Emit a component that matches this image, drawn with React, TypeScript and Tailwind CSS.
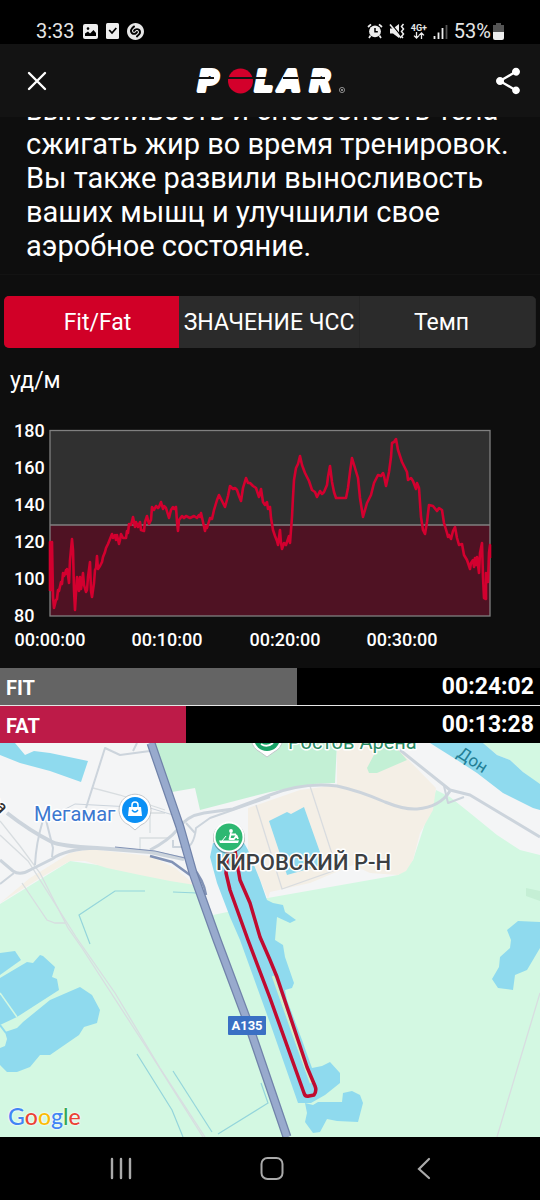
import { useState } from "react";
import { MdShare } from "react-icons/md";
import { SiShazam } from "react-icons/si";

const tabs = [
  { name: "Fit/Fat", padding: "pl-3" },
  { name: "ЗНАЧЕНИЕ ЧСС", padding: "" },
  { name: "Темп", padding: "pr-3" },
];

const zones = [
  { name: "FIT", time: "00:24:02", percent: 55, color: "bg-[#646464]" },
  { name: "FAT", time: "00:13:28", percent: 34.5, color: "bg-[#bd1b48]" },
];

const bpmLabels = [
  { label: "180", y: 27 },
  { label: "160", y: 64 },
  { label: "140", y: 101 },
  { label: "120", y: 138 },
  { label: "100", y: 175 },
  { label: "80", y: 212 },
];

const timeLabels = [
  { label: "00:00:00", x: 50 },
  { label: "00:10:00", x: 167 },
  { label: "00:20:00", x: 285 },
  { label: "00:30:00", x: 402 },
];

const heartRate =
  "50,181 50,132 51,180 52,132 53,187 54,198 56,190 57,189 58,180 59,181 61,172 62,174 63,163 64,166 65,164 66,160 67,164 67,159 68,165 69,173 70,150 72,129 73,140 74,180 75,200 76,183 77,167 78,174 79,181 80,167 81,179 82,172 83,163 84,175 86,182 87,180 88,167 90,152 91,181 92,187 94,173 95,160 96,158 97,146 98,159 100,156 102,152 103,147 105,142 106,138 108,134 110,129 112,124 113,128 115,125 116,130 117,125 119,134 120,130 121,124 123,128 126,128 127,121 128,123 129,114 131,115 133,107 135,117 136,112 138,117 140,112 141,120 144,121 145,112 147,106 149,114 151,110 152,97 154,100 156,96 158,98 159,97 161,92 163,99 164,96 166,98 169,108 171,100 173,97 174,99 176,97 177,112 178,121 179,110 182,106 184,108 186,106 190,108 194,106 197,108 199,105 200,107 201,103 203,112 205,121 206,116 207,118 210,108 212,109 214,100 217,90 219,85 222,91 225,97 228,86 230,76 233,79 235,78 237,80 239,86 241,91 243,78 246,68 248,73 250,73 253,76 256,78 259,87 261,79 263,92 265,95 267,92 268,99 270,97 271,108 273,120 275,126 277,131 278,135 280,120 281,133 282,139 284,133 286,135 287,132 289,126 290,133 292,107 293,87 294,70 296,58 298,54 300,46 302,55 305,63 309,71 312,80 315,82 317,87 320,81 322,84 324,82 327,75 328,67 330,56 332,72 334,82 336,88 341,88 346,88 348,78 350,62 352,48 355,58 358,68 360,88 363,107 367,93 371,85 374,73 378,65 381,66 383,63 384,66 386,76 389,62 391,47 392,33 394,32 396,29 398,40 402,52 407,62 408,70 411,68 413,71 416,79 417,73 419,78 421,107 423,120 425,124 427,112 429,95 433,96 437,101 439,98 442,100 444,113 447,123 448,127 449,125 451,129 453,121 455,117 457,128 459,135 462,134 464,145 467,150 470,159 471,153 473,150 474,157 475,148 476,155 477,147 479,163 480,143 482,133 483,167 484,188 486,189 486,163 488,172 489,143 490,135 490,148";

function StatusBar() {
  return (
    <div className="flex h-11 items-center justify-between bg-black px-9 pt-[18px] text-[20px] leading-7 text-[#e6e6e6]">
      <div className="flex items-center gap-[8px]">
        <span>3:33</span>
        <svg className="h-[15px] w-[15px]" viewBox="0 0 15 15">
          <rect width="15" height="15" rx="2" fill="#eee" />
          <circle cx="5" cy="4.6" r="1.3" fill="#000" />
          <path d="M2 12 V9.5 L5 7.5 L7 9.5 L10.5 6 L13 9 V12 Z" fill="#000" />
        </svg>
        <svg className="h-[16px] w-[13px]" viewBox="0 0 13 16">
          <rect width="13" height="16" rx="1.5" fill="#eee" />
          <path d="M3.2 7 L6 10 L10.3 5" fill="none" stroke="#000" strokeWidth="1.8" />
        </svg>
        <SiShazam className="h-[17px] w-[17px]" />
      </div>
      <div className="flex items-center gap-[6px]">
        <svg className="h-[16px] w-[16px]" viewBox="0 0 16 16">
          <circle cx="8" cy="8.4" r="5.9" fill="#eee" />
          <path d="M8 5 V8.8 H10.8" fill="none" stroke="#000" strokeWidth="1.5" />
          <path d="M1 4 L4 1.3 M15 4 L12 1.3 M3.6 12.5 L2 15 M12.4 12.5 L14 15" stroke="#eee" strokeWidth="1.7" />
        </svg>
        <svg className="h-[16px] w-[16px]" viewBox="0 0 16 16">
          <path d="M1 5.5 H4 L10 1 V15 L4 10.5 H1 Z" fill="#eee" />
          <path d="M1.5 0 L12.5 13.5" stroke="#000" strokeWidth="1.2" />
          <path d="M1 1.5 L12 15" stroke="#eee" strokeWidth="1.6" />
          <path d="M14.5 1 L12.5 3.5 L14.5 6 L12.5 8.5 L14.5 11 L12.5 13.5 L14 15" fill="none" stroke="#eee" strokeWidth="1.5" />
        </svg>
        <div className="flex w-[16px] flex-col items-center">
          <span className="text-[9px] leading-[8px] font-bold">4G+</span>
          <svg className="h-[7px] w-[12px]" viewBox="0 0 12 7">
            <path d="M3.5 0 V6 M1 3.6 L3.5 6 L6 3.6 M8.5 7 V1 M6 3.4 L8.5 1 L11 3.4" fill="none" stroke="#eee" strokeWidth="1.3" />
          </svg>
        </div>
        <svg className="h-[15px] w-[15px]" viewBox="0 0 15 15">
          <path d="M1.5 15 V12 M5.5 15 V8.5 M9.5 15 V4" stroke="#eee" strokeWidth="1.8" />
          <path d="M13.5 15 V1" stroke="#555" strokeWidth="1.8" />
        </svg>
        <div className="flex items-center gap-[2px]">
          <span>53%</span>
          <svg className="h-[17px] w-[11px]" viewBox="0 0 11 17">
            <path d="M3 0 H8 V2 H11 V9 H0 V2 H3 Z" fill="#555" />
            <path d="M0 9 H11 V15 Q11 17 9 17 H2 Q0 17 0 15 Z" fill="#eee" />
          </svg>
        </div>
      </div>
    </div>
  );
}

function PolarLogo() {
  return (
    <svg className="h-[28px] w-[150px] overflow-visible" viewBox="0 0 150 28" role="img" aria-label="Polar">
      <g
        fill="#fff"
        stroke="#fff"
        strokeWidth="4"
        strokeLinejoin="round"
        fontFamily="DejaVu Sans"
        fontWeight="700"
        fontStyle="italic"
        fontSize="28"
      >
        <text x="3" y="24">P</text>
        <text x="60" y="24">L</text>
        <text x="84" y="24">A</text>
        <text x="115" y="24">R</text>
      </g>
      <circle cx="45.500" cy="14" r="12.500" fill="#d3002b" />
      <path d="M0 11 H19 M32 11 H76 M88 11 H103 M112 11 H130" stroke="#131313" strokeWidth="2" />
      <circle cx="147" cy="23" r="2.600" fill="none" stroke="#bbb" strokeWidth="0.700" />
      <circle cx="147" cy="23" r="0.900" fill="#bbb" />
    </svg>
  );
}

function Header() {
  return (
    <header className="grid h-[73px] grid-cols-[1fr_auto_1fr] items-center bg-[#131313] px-4">
      <button type="button" aria-label="Закрыть" className="flex w-[42px] justify-center">
        <svg className="h-[26px] w-[26px]" viewBox="0 0 26 26">
          <path d="M5 5 L21 21 M21 5 L5 21" stroke="#fff" strokeWidth="2.4" strokeLinecap="round" />
        </svg>
      </button>
      <PolarLogo />
      <button type="button" aria-label="Поделиться" className="justify-self-end text-white">
        <MdShare className="h-[32px] w-[32px]" />
      </button>
    </header>
  );
}

function HeartRateChart() {
  return (
    <svg className="block w-full" viewBox="0 0 540 258">
      <rect x="50" y="21" width="440" height="94" fill="#303030" />
      <rect x="50" y="115" width="440" height="91" fill="#4f1223" />
      <path d="M50 115 H490" stroke="#808080" strokeWidth="1.300" />
      <rect x="50" y="20.500" width="440" height="185.500" fill="none" stroke="#808080" strokeWidth="1.300" />
      <polyline points={heartRate} fill="none" stroke="#d3002f" strokeWidth="2.600" strokeLinejoin="round" />
      <g fill="#fff" fontFamily="Roboto" fontWeight="500" fontSize="18">
        {bpmLabels.map((item) => (
          <text key={item.label} x="14" y={item.y}>{item.label}</text>
        ))}
        {timeLabels.map((item) => (
          <text key={item.label} x={item.x} y="236" textAnchor="middle">{item.label}</text>
        ))}
      </g>
    </svg>
  );
}

function RouteMap() {
  return (
    <section className="relative overflow-hidden bg-[#d3f8e2]">
      <svg className="block w-full" viewBox="0 0 540 394">
        <rect width="540" height="394" fill="#d3f8e2" />

        {/* city blocks */}
        <path d="M0 0 H540 V112 L520 107 497 92 470 70 450 54 436 47 413 117 398 132 262 156 232 168 213 172 200 142 140 128 70 118 0 161 Z" fill="#f4f5f6" />
        <path d="M0 160 L30 135 70 110 90 106 150 113 175 125 195 142 170 138 140 132 107 125 85 118 70 118 45 132 Z" fill="#f5f0e6" />
        <path d="M248 65 L300 47 337 42 337 0 392 0 436 45 433 67 420 90 413 117 406 128 398 132 370 130 353 122 310 140 270 149 268 156 248 107 Z" fill="#f4efe6" />
        <path d="M155 0 H337 L335 40 313 41 270 49 200 67 195 45 172 49 Z" fill="#c3f0d5" />
        <path d="M375 0 L376 8 367 25 369 30 377 30 407 17 392 0 Z" fill="#c3f0d5" />
        <path d="M483 0 H540 V42 L523 29 510 17 497 12 Z" fill="#d3f8e2" />
        <path d="M526 145 L540 148 V158 L526 153 Z" fill="#c5efd5" />

        {/* water */}
        <g fill="#8fdaee">
          <path d="M0 0 H15 L25 12 34 8 50 10 88 18 81 39 50 28 20 20 0 12 Z" />
          <path d="M430 0 H483 L497 12 510 17 523 29 540 41 V67 L533 65 503 50 477 30 457 17 Z" />
          <path d="M269 78 L287 69 291 71 304 64 321 112 322 122 287 132 Z" />
          <path d="M213 100 L210 114 217 140 230 174 240 197 270 280 298 360 311 360 325 352 340 340 340 330 330 319 322 323 312 325 302 297 287 257 285 247 292 245 294 240 285 214 283 202 275 197 277 174 290 180 296 177 285 169 283 162 273 160 267 157 260 137 248 107 244 100 Z" />
          <path d="M305 360 L313 362 318 359 342 359 343 350 352 348 360 352 363 360 358 379 337 378 327 376 320 389 313 390 305 379 307 370 Z" />
          <path d="M0 210 L15 208 21 217 0 232 Z" />
          <path d="M0 235 L27 219 33 220 40 212 43 213 55 224 52 234 57 236 59 247 17 274 0 282 Z" />
          <path d="M5 289 L17 285 23 279 50 257 80 244 92 252 100 267 97 280 84 284 79 292 50 312 40 312 30 324 17 329 7 329 0 322 V305 L5 303 7 296 Z" />
          <path d="M507 187 L518 178 540 179 V205 L527 227 515 232 513 247 498 245 492 236 499 224 500 214 510 205 511 197 Z" />
        </g>
        <path d="M0 250 L17 274" stroke="#d3f8e2" strokeWidth="1.500" />
        <path d="M0 282 L6 290" stroke="#8fdaee" strokeWidth="2" />
        <path d="M273 233 L292 287 311 340" fill="none" stroke="#d3efc9" strokeWidth="2.500" />

        {/* small streams and paths */}
        <g fill="none" stroke="#94d5db" strokeWidth="1.200">
          <path d="M145 148 H115 L79 172 90 201" />
          <path d="M173 149 L197 150" />
          <path d="M137 311 L172 367 183 394" />
          <path d="M173 328 L212 389" />
          <path d="M218 391 L268 360 261 340" />
        </g>
        <g fill="none" stroke="#d8dde0" strokeWidth="1.300">
          <path d="M0 78 L20 103 40 130 68 185 82 205 150 310 203 394" />
          <path d="M0 92 L28 118 76 194 115 250 160 325 205 394" />
          <path d="M22 140 L47 177 55 180 65 180" />
          <path d="M540 250 L522 310 497 394" />
          <path d="M310 43 L334 117 333 128 282 146 256 62" stroke="#d9dcdf" />
          <path d="M93 45 L120 52 165 67 M150 90 V70 H165 M140 108 V95 H170" />
        </g>

        {/* roads */}
        <g fill="none" stroke="#ccd4dc" strokeWidth="3" strokeLinejoin="round">
          <path d="M86 65 L105 5 120 12 150 8 M133 8 L137 0" strokeWidth="2" />
          <path d="M7 70 Q30 88 52 99 Q60 103 97 105 L150 109 184 116" strokeWidth="4" />
          <path d="M0 117 L13 128 Q20 133 30 127 L52 116 Q65 106 97 105" />
          <path d="M0 141 L14 130 M35 122 Q36 100 43 77 M46 77 L53 105 52 114" strokeWidth="2" />
          <path d="M50 74 L75 61 150 65 173 72" strokeWidth="1" />
          <path d="M150 107 Q168 98 178 86 Q186 73 204 70 L233 66 270 52 Q303 39 337 43 Q360 48 385 59 Q405 67 417 66 Q440 64 450 48" />
          <path d="M400 7 L450 47 470 52 500 70 540 94" />
          <path d="M182 107 Q194 105 196 85 L210 75 270 54" strokeWidth="2" />
          <path d="M444 43 L448 60 464 54" strokeWidth="2" />
          <path d="M173 97 V104 H182 M186 80 L195 90" strokeWidth="2" />
        </g>
        <g fill="none" stroke="#8192b5" strokeWidth="2.500">
          <path d="M115 104 L155 108 185 115" strokeWidth="1" />
          <path d="M150 113 L172 119 190 132 M191 122 Q204 137 206 152" />
        </g>
        <path d="M151 0 L180 84 193 130 217 197 247 277 287 394" fill="none" stroke="#7183aa" strokeWidth="9" />
        <path d="M151 0 L180 84 193 130 217 197 247 277 287 394" fill="none" stroke="#98aacd" strokeWidth="6.500" />

        {/* route */}
        <path
          d="M228 105 L226 130 230 147 248 197 270 255 304 350 Q305 354 309 353 L314 352 Q317 348 315 343 L307 324 298 297 277 234 270 217 260 194 250 160 240 137 235 108"
          fill="none"
          stroke="#c00b30"
          strokeWidth="3.500"
          strokeLinejoin="round"
        />

        {/* labels */}
        <g fontFamily="Roboto" fontWeight="500" fontSize="20" stroke="#fff" strokeWidth="3" strokeLinejoin="round" paintOrder="stroke">
          <text x="34" y="78" fill="#3c78d0" fontWeight="400">Мегамаг</text>
          <text x="288" y="6" fill="#2b8a63" fontWeight="400">Ростов Арена</text>
          <text x="216" y="127" fill="#3c4043" fontSize="22">КИРОВСКИЙ Р-Н</text>
          <text x="-12" y="57" fill="#333" fontSize="17" transform="rotate(48 -12 57)">ва</text>
        </g>
        <text x="456" y="13" fill="#237f96" fontFamily="Roboto" fontSize="17" transform="rotate(33 456 13)">Дон</text>
        <rect x="228" y="273" width="38" height="19" rx="1" fill="#3a70c4" />
        <text x="247" y="287" fill="#fff" fontFamily="Roboto" fontWeight="700" fontSize="13" textAnchor="middle">A135</text>

        {/* shop pin */}
        <path d="M135 87 L129 82 A16 16 0 1 1 141 82 Z" fill="#fff" stroke="#c4c8cc" />
        <circle cx="135" cy="67" r="13" fill="#0b90f5" />
        <path d="M129 64 H141 L142 73 H128 Z" fill="#fff" />
        <path d="M132 64 V62 A3 3 0 0 1 138 62 V64" fill="none" stroke="#fff" strokeWidth="1.500" />
        <path d="M132 67 Q135 71 138 67" fill="none" stroke="#0b90f5" strokeWidth="1.300" />

        {/* stadium pin */}
        <path d="M267 14 L260 9 A16 16 0 1 1 274 9 Z" fill="#fff" stroke="#c4c8cc" />
        <circle cx="267" cy="-5" r="13" fill="#1aa367" />
        <path d="M261 1 Q267 5 273 0" fill="none" stroke="#fff" strokeWidth="2" />

        {/* rowing start */}
        <circle cx="229" cy="95" r="16" fill="#000" opacity="0.3" />
        <circle cx="229" cy="94" r="15.500" fill="#fff" />
        <circle cx="229" cy="94" r="13.500" fill="#2eb872" />
        <circle cx="231" cy="88" r="1.900" fill="#fff" />
        <path d="M231 90 L229.500 96 H234 L236.500 92.500 L238 96 M231 91.500 H236" fill="none" stroke="#fff" strokeWidth="1.800" strokeLinejoin="round" />
        <path d="M219 97.500 H239 L238 100 H220 Z" fill="#fff" />
        <path d="M226 93 L222 98" stroke="#fff" strokeWidth="1" />
      </svg>
      <div className="absolute bottom-[7px] left-2 flex text-[23px] leading-7 font-medium [font-family:Lato,sans-serif] [text-shadow:0_0_2px_#fff,0_0_2px_#fff]">
        <span className="text-[#4285f4]">G</span>
        <span className="text-[#ea4335]">o</span>
        <span className="text-[#fbbc05]">o</span>
        <span className="text-[#4285f4]">g</span>
        <span className="text-[#34a853]">l</span>
        <span className="text-[#ea4335]">e</span>
      </div>
    </section>
  );
}

function NavigationBar() {
  return (
    <nav className="grid h-[63px] grid-cols-3 place-items-center bg-black pr-[42px] pl-[46px]">
      <button type="button" aria-label="Недавние">
        <svg className="h-6 w-6" viewBox="0 0 24 24">
          <path d="M3 2 V21 M12 2 V21 M21 2 V21" stroke="#aaa" strokeWidth="2.400" strokeLinecap="round" />
        </svg>
      </button>
      <button type="button" aria-label="Домой">
        <svg className="h-6 w-6" viewBox="0 0 24 24">
          <rect x="1.500" y="1" width="21" height="21" rx="6" fill="none" stroke="#aaa" strokeWidth="2" />
        </svg>
      </button>
      <button type="button" aria-label="Назад">
        <svg className="h-6 w-6" viewBox="0 0 24 24">
          <path d="M18 2 L8 12 L18 21" fill="none" stroke="#aaa" strokeWidth="2.200" strokeLinecap="round" />
        </svg>
      </button>
    </nav>
  );
}

export default function App() {
  const [activeTab, setActiveTab] = useState("Fit/Fat");

  return (
    <div className="min-h-screen bg-[#0e0e0e] text-white [font-family:Roboto,sans-serif]">
      <StatusBar />
      <Header />

      <section className="flex h-[158px] items-end overflow-hidden border-b border-[#131313] pr-6 pb-[11px] pl-[26px]">
        <p className="text-[29px] leading-[34px]">
          выносливость и способность тела сжигать жир во время тренировок. Вы также
          развили выносливость ваших мышц и улучшили свое аэробное состояние.
        </p>
      </section>

      <div className="mx-1 mt-[21px] grid h-[52px] grid-cols-[175fr_181fr_176fr] overflow-hidden rounded-[5px] bg-[#2b2b2b] text-[23px]">
        {tabs.map((tab) => (
          <button
            key={tab.name}
            type="button"
            aria-pressed={tab.name === activeTab}
            onClick={() => setActiveTab(tab.name)}
            className={`pt-[3px] whitespace-nowrap ${tab.padding} ${tab.name === activeTab ? "bg-[#d10027]" : "border-r border-[#262626]"}`}
          >
            {tab.name}
          </button>
        ))}
      </div>

      <p className="h-[62px] pt-[19px] pl-[10px] text-[23px] leading-7">уд/м</p>
      <HeartRateChart />

      <div className="flex flex-col gap-px bg-[#e6e6e6] text-[20px] font-bold">
        {zones.map((zone) => (
          <div key={zone.name} className="relative flex h-[37px] items-center justify-between bg-black px-[6px] pt-[2px]">
            <div className={`absolute inset-y-0 left-0 ${zone.color}`} style={{ width: `${zone.percent}%` }} />
            <span className="relative">{zone.name}</span>
            <span className="relative text-[23px]">{zone.time}</span>
          </div>
        ))}
      </div>

      <RouteMap />
      <NavigationBar />
    </div>
  );
}
